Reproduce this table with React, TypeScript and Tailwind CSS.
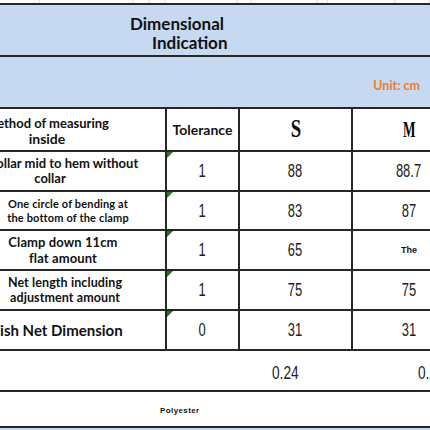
import React from 'react';

const label = "font-['Lato','Open_Sans',sans-serif] font-bold text-[#111]";

// narrow spreadsheet-style digits
const Num = ({ v }: { v: string }) => (
  <span className="inline-block scale-x-[0.72] font-['Liberation_Sans',sans-serif] text-[18px] leading-none text-[#222]">
    {v}
  </span>
);

const Flag = () => (
  <div className="absolute left-0 top-0 h-0 w-0 border-r-[6px] border-t-[6px] border-r-transparent border-t-[#1f7a1f]" />
);

type Row = {
  h: string;
  text: React.ReactNode;
  tol: string;
  s: string;
  m: React.ReactNode;
};

const rows: Row[] = [
  {
    h: 'h-[40px]',
    text: (
      <div className="text-[13px] leading-[15px]">
        Collar mid to hem without
        <br />
        <span className="pr-[26px]">collar</span>
      </div>
    ),
    tol: '1',
    s: '88',
    m: <Num v="88.7" />,
  },
  {
    h: 'h-[39px]',
    text: (
      <div className="pl-[10px] text-[11px] leading-[14px] tracking-[0.15px]">
        One circle of bending at
        <br />
        the bottom of the clamp
      </div>
    ),
    tol: '1',
    s: '83',
    m: <Num v="87" />,
  },
  {
    h: 'h-[40px]',
    text: (
      <div className="text-[13px] leading-[16px] tracking-[0.1px]">
        Clamp down 11cm
        <br />
        flat amount
      </div>
    ),
    tol: '1',
    s: '65',
    m: <span className="pt-[2px] font-['Liberation_Sans',sans-serif] text-[9px] font-bold text-[#111]">The</span>,
  },
  {
    h: 'h-[40px]',
    text: (
      <div className="pl-[4px] text-[12.5px] leading-[15px] tracking-[0.1px]">
        Net length including
        <br />
        adjustment amount
      </div>
    ),
    tol: '1',
    s: '75',
    m: <Num v="75" />,
  },
  {
    h: 'h-[40px]',
    text: <div className="pr-[24px] text-[15px] leading-[18px]">Finish Net Dimension</div>,
    tol: '0',
    s: '31',
    m: <Num v="31" />,
  },
];

export default function App() {
  return (
    <div className="h-[430px] w-[430px] overflow-hidden bg-white">
      {/* faint sheet grid above the table */}
      <div className="flex h-[3px]">
        {[40, 93, 17, 15, 73, 14, 66, 10, 67, 35].map((w, i) => (
          <div key={i} style={{ width: w }} className="shrink-0 border-r border-[#e2e2e2]" />
        ))}
      </div>

      <div className="flex h-[54px] border-y-2 border-[#262626] bg-[#c6d9f0]">
        <div className={`${label} pl-[130px] pt-[9px] text-[17px] leading-[19px]`}>
          <div>Dimensional</div>
          <div className="pl-[22px]">Indication</div>
        </div>
      </div>

      <div className="flex h-[52px] items-center justify-end border-b-2 border-[#262626] bg-[#c6d9f0] pr-[10px] pt-[9px]">
        <span className={`${label} text-[12.5px] !text-[#f07c2c]`}>Unit: cm</span>
      </div>

      {/* header row */}
      <div className="flex h-[43px] border-b-2 border-[#262626]">
        <div className="flex w-[167px] shrink-0 items-center justify-start overflow-hidden border-r-2 border-[#262626] pt-[3px]">
          <div className={`${label} -ml-[56px] w-[206px] shrink-0 text-center text-[13px] leading-[15px]`}>
            Method of measuring
            <br />
            <span className="text-[14px]">inside</span>
          </div>
        </div>
        <div className={`${label} flex w-[73px] shrink-0 items-center justify-center border-r-2 border-[#262626] text-[14px]`}>
          Tolerance
        </div>
        <div className="flex w-[113px] shrink-0 items-center justify-center border-r-2 border-[#262626] pb-[2px]">
          <span className="inline-block scale-x-[0.75] font-['Liberation_Serif',serif] text-[25px] font-bold leading-none text-[#111]">S</span>
        </div>
        <div className="flex w-[112px] shrink-0 items-center justify-center pb-[2px]">
          <span className="inline-block scale-x-[0.55] font-['Liberation_Serif',serif] text-[24px] font-black leading-none text-[#000]">M</span>
        </div>
      </div>

      {rows.map((r, i) => (
        <div key={i} className={`flex ${r.h} border-b-2 border-[#262626]`}>
          <div className="flex w-[167px] shrink-0 items-center justify-start overflow-hidden border-r-2 border-[#262626]">
            <div className={`${label} -ml-[40px] w-[206px] shrink-0 text-center`}>{r.text}</div>
          </div>
          <div className="relative flex w-[73px] shrink-0 items-center justify-center border-r-2 border-[#262626]">
            <Flag />
            <Num v={r.tol} />
          </div>
          <div className="flex w-[113px] shrink-0 items-center justify-center border-r-2 border-[#262626]">
            <Num v={r.s} />
          </div>
          <div className="flex w-[112px] shrink-0 items-center justify-center">{r.m}</div>
        </div>
      ))}

      <div className="flex h-[41px] items-center border-b-2 border-[#262626] pt-[4px]">
        <div className="w-[272px] shrink-0" />
        <div className="w-[146px] shrink-0">
          <span className="inline-block origin-left scale-x-[0.72] font-['Liberation_Sans',sans-serif] text-[19px] leading-none text-[#222]">0.24</span>
        </div>
        <span className="inline-block origin-left scale-x-[0.72] font-['Liberation_Sans',sans-serif] text-[19px] leading-none text-[#222]">0.24</span>
      </div>

      <div className="flex h-[36px] items-center border-b-2 border-[#262626] pl-[160px] pt-[4px]">
        <span className="font-['Liberation_Sans',sans-serif] text-[8px] font-bold tracking-[0.4px] text-[#111]">Polyester</span>
      </div>

      <div className="h-[10px] bg-[#c6d9f0]" />
    </div>
  );
}
